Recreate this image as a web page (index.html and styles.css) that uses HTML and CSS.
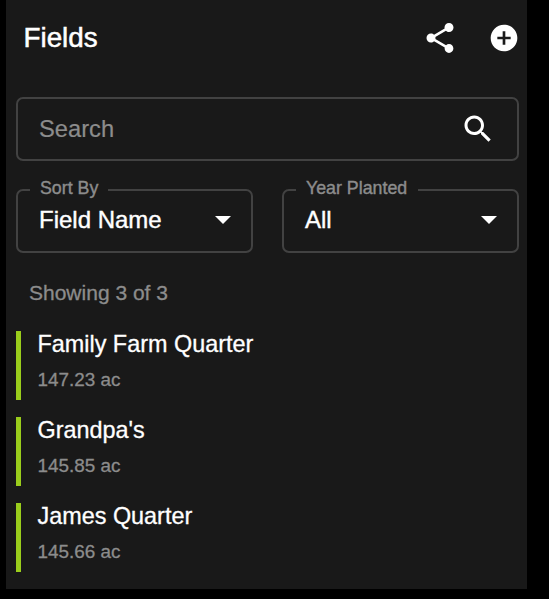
FILE: index.html
```html
<!DOCTYPE html>
<html lang="en">
<head>
    <meta charset="UTF-8">
    <meta name="viewport" content="width=device-width, initial-scale=1"/>
    <title>Fields</title>
    <link rel="stylesheet" href="styles.css">
</head>
<body>
<main>
    <header>
        <h1>Fields</h1>
        <div class="actions">
            <svg class="icon" viewBox="0 0 24 24" aria-label="Share">
                <path d="M18 16.08c-.76 0-1.44.3-1.96.77L8.91 12.7c.05-.23.09-.46.09-.7s-.04-.47-.09-.7l7.05-4.11c.54.5 1.25.81 2.04.81 1.66 0 3-1.34 3-3s-1.34-3-3-3-3 1.34-3 3c0 .24.04.47.09.7L8.04 9.81C7.5 9.31 6.79 9 6 9c-1.66 0-3 1.34-3 3s1.34 3 3 3c.79 0 1.5-.31 2.04-.81l7.12 4.16c-.05.21-.08.43-.08.65 0 1.61 1.31 2.92 2.92 2.92s2.92-1.31 2.92-2.92-1.31-2.92-2.92-2.92z"/>
            </svg>
            <svg class="icon add" viewBox="0 0 24 24" aria-label="Add">
                <path d="M12 2C6.48 2 2 6.48 2 12s4.48 10 10 10 10-4.48 10-10S17.52 2 12 2zm5 11h-4v4h-2v-4H7v-2h4V7h2v4h4v2z"/>
            </svg>
        </div>
    </header>
    <div class="search">
        <span>Search</span>
        <svg class="icon" viewBox="0 0 24 24">
            <path d="M15.5 14h-.79l-.28-.27C15.41 12.59 16 11.11 16 9.5 16 5.91 13.09 3 9.5 3S3 5.91 3 9.5 5.91 16 9.5 16c1.61 0 3.09-.59 4.23-1.57l.27.28v.79l5 4.99L20.49 19l-4.99-5zm-6 0C7.01 14 5 11.99 5 9.5S7.01 5 9.5 5 14 7.01 14 9.5 11.99 14 9.5 14z"/>
        </svg>
    </div>
    <div class="filters">
        <fieldset class="select">
            <legend>Sort By</legend>
            <div class="value">
                <span>Field Name</span>
                <svg class="arrow" viewBox="0 0 16 8"><path d="M0 0h16L8 8z"/></svg>
            </div>
        </fieldset>
        <fieldset class="select">
            <legend class="wide">Year Planted</legend>
            <div class="value">
                <span>All</span>
                <svg class="arrow" viewBox="0 0 16 8"><path d="M0 0h16L8 8z"/></svg>
            </div>
        </fieldset>
    </div>
    <p class="count">Showing 3 of 3</p>
    <ul>
        <li>
            <div class="name">Family Farm Quarter</div>
            <div class="acres">147.23 ac</div>
        </li>
        <li>
            <div class="name">Grandpa's</div>
            <div class="acres">145.85 ac</div>
        </li>
        <li>
            <div class="name">James Quarter</div>
            <div class="acres">145.66 ac</div>
        </li>
    </ul>
</main>
</body>
</html>
```

FILE: styles.css
```css
* {
    box-sizing: border-box;
    font-family: 'Liberation Sans', Arial, sans-serif;
}

body {
    margin: 0;
    background-color: black;
    color: white;
    height: 599px;
    overflow: hidden;
}

main {
    background-color: #191919;
    width: 521px;
    height: 589px;
    margin-left: 6px;
    padding: 0 8px 0 10px;
}

header {
    display: flex;
    justify-content: space-between;
    align-items: center;
    height: 76px;
    padding-left: 7.5px;
}

h1 {
    margin: 0;
    font-size: 27.8px;
    font-weight: normal;
    -webkit-text-stroke: 0.5px white;
}

.actions {
    display: flex;
    align-items: center;
    gap: 30px;
}

.icon {
    width: 36px;
    height: 36px;
    fill: white;
}

.add {
    width: 32px;
    height: 32px;
    margin: 0 -0.5px 1px 0;
}

.search {
    display: flex;
    justify-content: space-between;
    align-items: center;
    height: 64px;
    margin-top: 21px;
    padding: 0 21.5px 0 21px;
    border: 2px solid #424242;
    border-radius: 7px;
    color: #8c8c8c;
    font-size: 23.7px;
    -webkit-text-stroke: 0.2px #8c8c8c;
}

.filters {
    display: flex;
    gap: 29px;
    margin-top: 18px;
}

.select {
    flex: 1;
    min-width: 0;
    height: 74px;
    margin: 0;
    padding: 0 20px 0 12px;
    border: 2px solid #424242;
    border-radius: 7px;
}

legend {
    height: 22px;
    width: 78px;
    padding: 0 10px;
    color: #8c8c8c;
    font-size: 17.8px;
    line-height: 19px;
    white-space: nowrap;
    -webkit-text-stroke: 0.4px #8c8c8c;
}

legend.wide {
    width: 122px;
}

.value {
    display: flex;
    justify-content: space-between;
    align-items: center;
    height: 38px;
    padding-left: 9px;
    font-size: 24px;
    -webkit-text-stroke: 0.4px white;
}

.arrow {
    width: 16px;
    height: 8px;
    fill: white;
}

.count {
    margin: 27px 0 0 13px;
    color: #8c8c8c;
    font-size: 21px;
    line-height: 26px;
    -webkit-text-stroke: 0.3px #8c8c8c;
}

ul {
    display: grid;
    row-gap: 17px;
    list-style: none;
    margin: 25px 0 0;
    padding: 0;
}

li {
    height: 69px;
    padding-left: 16.5px;
    border-left: 5px solid #9acd1c;
}

.name {
    font-size: 23.4px;
    line-height: 26px;
    -webkit-text-stroke: 0.3px white;
}

.acres {
    margin-top: 11px;
    color: #8c8c8c;
    font-size: 18.9px;
    line-height: 24px;
    -webkit-text-stroke: 0.3px #8c8c8c;
}
```
